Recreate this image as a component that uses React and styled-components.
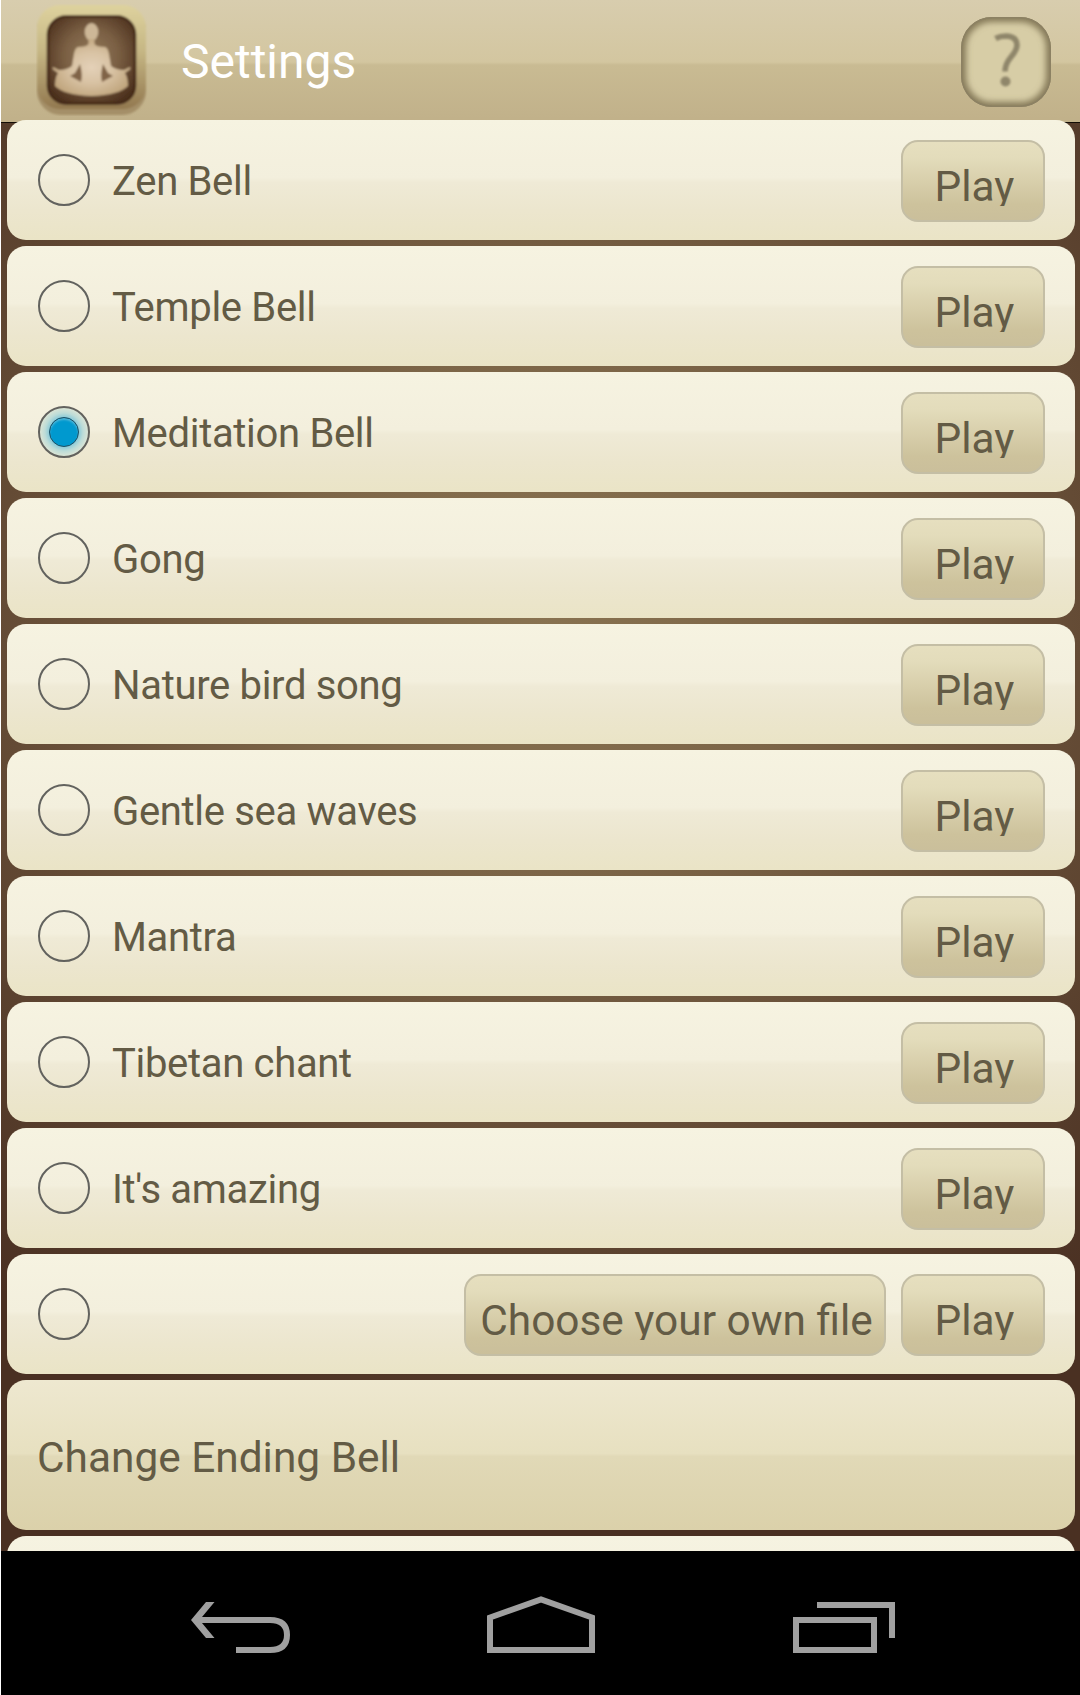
import React from "react";
import styled, { createGlobalStyle } from "styled-components";

const Global = createGlobalStyle`
  *, *::before, *::after { box-sizing: border-box; }
  body { margin: 0; background: #fff; font-family: Roboto, "Liberation Sans", sans-serif; }
`;

const Screen = styled.div`
  width: 1080px;
  height: 1695px;
  padding-left: 1px;
  display: flex;
  flex-direction: column;
  overflow: hidden;
  background: #fff;
`;

const Header = styled.header`
  flex: none;
  height: 120px;
  padding: 0 29px 0 35px;
  display: flex;
  align-items: center;
  background: linear-gradient(#d8cdae 0, #d3c6a0 62px, #c9bb93 65px, #c1b18a 119px);
`;

const AppIcon = styled.svg`
  flex: none;
  width: 112px;
  height: 112px;
`;

const Title = styled.h1`
  margin: 4px 0 0 33px;
  flex: 1;
  color: #fff;
  font-size: 48px;
  line-height: 60px;
  font-weight: 400;
`;

const HelpButton = styled.button`
  width: 90px;
  height: 90px;
  margin-top: 4px;
  padding: 0;
  border: 0;
  background: none;
`;

const List = styled.main`
  height: 1431px;
  padding: 0 5px 0 6px;
  display: flex;
  flex-direction: column;
  gap: 6px;
  overflow: hidden;
  background:
    linear-gradient(#c1b18a 0 2px, #120c05 2px 3px, transparent 3px),
    radial-gradient(ellipse 860px 880px at 50% 34%, #887250 0, #7c6547 30%, #644b35 63%, #573e2c 80%, #4a3022 100%);
`;

const Card = styled.section`
  flex: none;
  height: 120px;
  padding: 0 30px 0 31px;
  display: flex;
  align-items: center;
  border-radius: 19px;
  background: linear-gradient(#f6f3e1 0, #f3efdd 48%, #efead6 52%, #ece6ce 75%, #eae4c6 100%);
`;

const SectionCard = styled(Card)`
  height: 150px;
  padding-top: 5px;
  padding-left: 30px;
  color: #635b45;
  font-size: 42.4px;
  background: linear-gradient(#eee8d0 0, #e7e0c0 49%, #e1d9b7 51%, #dbd1aa 100%);
`;

const Radio = styled.span`
  flex: none;
  width: 52px;
  height: 52px;
  display: grid;
  place-items: center;
  border: 2px solid #62625e;
  border-radius: 50%;
  background: ${(p) => (p.$on ? "radial-gradient(circle, #84c8d8 14px, #bcdcd8 19px, #e0e6d5 25px)" : "none")};
`;

const Dot = styled.span`
  width: 30px;
  height: 30px;
  border: 1px solid #1f4f62;
  border-radius: 50%;
  background: #0099cf;
  box-shadow: inset 0 2px 2px #4bb5d8;
`;

const Name = styled.span`
  flex: 1;
  margin-left: 22px;
  padding-top: 3px;
  color: #635b45;
  font-size: 40px;
  letter-spacing: -0.32px;
`;

const Button = styled.button`
  flex: none;
  width: ${(p) => p.$width}px;
  height: 82px;
  margin: 2px 0 0 15px;
  padding: 0 0 0 3px;
  display: flex;
  justify-content: center;
  align-items: flex-start;
  border: 2px solid #c4bea5;
  border-radius: 17px;
  background: linear-gradient(#e6dfbf 0, #e3dcbb 20%, #cdc29c 80%, #cabf9b 100%);
  color: #635b45;
  font: 42.4px Roboto, "Liberation Sans", sans-serif;
`;

const Label = styled.span`
  height: 64px;
  overflow: hidden;
  line-height: 90px;
  white-space: nowrap;
`;

const NavBar = styled.nav`
  height: 144px;
  display: flex;
  justify-content: center;
  background: #000;
  svg { display: block; }
`;

const Lotus = () => (
  <AppIcon viewBox="0 0 112 112">
    <defs>
      <linearGradient id="frame" x1="0" y1="0" x2="0" y2="1">
        <stop offset="0" stopColor="#ded29e" />
        <stop offset=".45" stopColor="#c5b684" />
        <stop offset="1" stopColor="#92784f" />
      </linearGradient>
      <radialGradient id="well" cx=".5" cy=".45" r=".62">
        <stop offset="0" stopColor="#92795a" />
        <stop offset=".5" stopColor="#7a5f43" />
        <stop offset="1" stopColor="#4c301d" />
      </radialGradient>
      <radialGradient id="skin" cx=".5" cy=".5" r=".55">
        <stop offset="0" stopColor="#e4d1b8" />
        <stop offset=".5" stopColor="#d8c2a3" />
        <stop offset="1" stopColor="#c0a57d" />
      </radialGradient>
      <filter id="soft"><feGaussianBlur stdDeviation=".9" /></filter>
    </defs>
    <g filter="url(#soft)">
      <rect x="1" y="2" width="109" height="109" rx="24" fill="#a48f68" />
      <rect x="1" y="1" width="109" height="104" rx="23" fill="url(#frame)" />
      <rect x="12" y="12.5" width="87" height="87" rx="18" fill="url(#well)" stroke="#432716" strokeWidth="2.500" />
      <ellipse cx="55.500" cy="28" rx="6.800" ry="9" fill="#cdb797" />
      <path fill="url(#skin)" d="M52.500 35H58.500V40Q60 43 69 43Q72 44 73 50L75 62Q80 66 88 66L94 63L94.500 65L89 69Q92 74 92 82Q83 91 55.500 92Q28 91 19 82Q19 74 22 69L16.500 65L17 63L23 66Q31 66 36 62L38 50Q39 44 42 43Q51 43 52.500 40Z" />
      <path fill="#806447" d="M44 60L39 69L34 72L45 78Q47 71 44 60ZM67 60L72 69L77 72L66 78Q64 71 67 60Z" />
    </g>
  </AppIcon>
);

const HelpIcon = () => (
  <svg width="90" height="90" viewBox="0 0 90 90">
    <defs>
      <filter id="haze" x="-20%" y="-20%" width="140%" height="140%"><feGaussianBlur stdDeviation="3" /></filter>
      <filter id="mark" x="-20%" y="-20%" width="140%" height="140%"><feGaussianBlur stdDeviation="1.1" /></filter>
      <clipPath id="pill"><rect width="90" height="90" rx="31" /></clipPath>
    </defs>
    <g clipPath="url(#pill)">
      <rect width="90" height="90" rx="31" fill="#d7cda6" />
      <rect width="90" height="90" rx="31" fill="none" stroke="#857958" strokeWidth="10" filter="url(#haze)" />
      <rect x=".5" y=".5" width="89" height="89" rx="30.500" fill="none" stroke="#8c8163" strokeWidth="2" />
    </g>
    <g filter="url(#mark)" fill="none" stroke="#8f866a" strokeWidth="5.600">
      <path d="M34.500 21.500Q39 19 45 19Q56 19.500 56 28Q56 33 50 40Q44 47 44 54.500" />
      <circle cx="44.500" cy="64.500" r="5" fill="#8f866a" stroke="none" />
    </g>
  </svg>
);

const bells = [
  "Zen Bell", "Temple Bell", "Meditation Bell", "Gong", "Nature bird song",
  "Gentle sea waves", "Mantra", "Tibetan chant", "It's amazing",
];

export default function App() {
  const [selected, setSelected] = React.useState("Meditation Bell");
  return (
    <Screen>
      <Global />
      <Header>
        <Lotus />
        <Title>Settings</Title>
        <HelpButton aria-label="Help"><HelpIcon /></HelpButton>
      </Header>
      <List>
        {bells.map((b) => (
          <Card key={b}>
            <Radio $on={b === selected} onClick={() => setSelected(b)}>{b === selected && <Dot />}</Radio>
            <Name>{b}</Name>
            <Button $width={144}><Label>Play</Label></Button>
          </Card>
        ))}
        <Card>
          <Radio />
          <Name />
          <Button $width={422}><Label>Choose your own file</Label></Button>
          <Button $width={144}><Label>Play</Label></Button>
        </Card>
        <SectionCard>Change Ending Bell</SectionCard>
        <Card />
      </List>
      <NavBar>
        <svg width="1079" height="144" viewBox="2 1551 1079 144" fill="none" stroke="#a0a0a0" strokeWidth="6">
          <path d="M200 1620h71q17 0 17 15t-17 15h-34" />
          <path fill="#a0a0a0" stroke="none" d="M192 1620l15-18h8.500l-15 18 15 18h-8.500z" />
          <path d="M491 1650v-32.500l51-18 51 18v32.500z" />
          <path d="M797 1620h78v30h-78zM818 1605h75v33" />
        </svg>
      </NavBar>
    </Screen>
  );
}
